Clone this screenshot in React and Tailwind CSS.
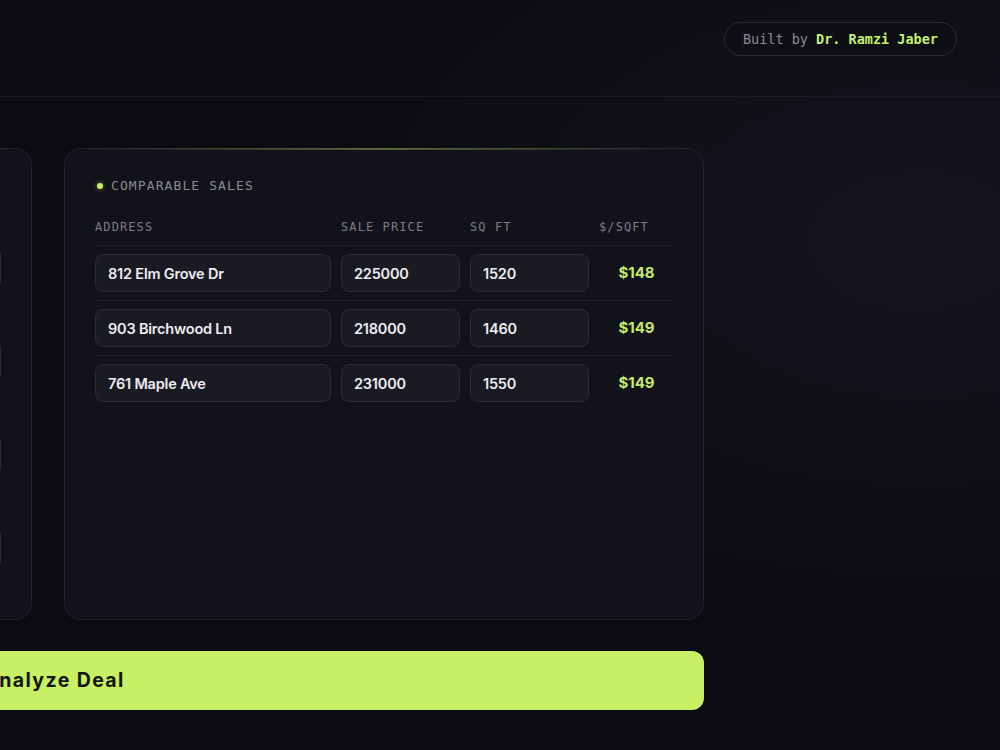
import React from "react";

const comps = [
  { address: "812 Elm Grove Dr", price: "225000", sqft: "1520", ppsf: "$148" },
  { address: "903 Birchwood Ln", price: "218000", sqft: "1460", ppsf: "$149" },
  { address: "761 Maple Ave", price: "231000", sqft: "1550", ppsf: "$149" },
];

const leftFields = [
  { label: "PURCHASE PRICE", value: "210000" },
  { label: "SQUARE FOOTAGE", value: "1500" },
  { label: "REHAB BUDGET", value: "35000" },
  { label: "HOLDING MONTHS", value: "6" },
];

const mono = { fontFamily: '"DejaVu Sans Mono", "Liberation Mono", monospace' };
const sans = { fontFamily: 'Inter, "Noto Sans", sans-serif' };

function Card({ children, className = "" }) {
  return (
    <div
      className={
        "relative w-[640px] shrink-0 h-[472px] rounded-[16px] border border-[#22222b] bg-[#12121a] " +
        className
      }
    >
      <div className="pointer-events-none absolute left-[16px] right-[16px] top-[-1px] h-[2px] bg-gradient-to-r from-transparent via-[#c8f064]/35 to-transparent" />
      {children}
    </div>
  );
}

function Title({ text }) {
  return (
    <div className="flex items-center gap-[8px] h-[16px]">
      <span className="w-[6px] h-[6px] rounded-full bg-[#c8f064] shadow-[0_0_5px_rgba(200,240,100,0.5)] ml-[2px]" />
      <span className="text-[13px] tracking-[1.1px] text-[#8a8a94] leading-[16px]" style={mono}>
        {text}
      </span>
    </div>
  );
}

export default function App() {
  return (
    <div
      className="min-h-screen w-full overflow-hidden bg-[#0b0b11] bg-[radial-gradient(ellipse_60%_50%_at_92%_32%,#15151e_0%,#0b0b11_100%)]"
      style={sans}
    >
      <header className="h-[97px] border-b border-[#1b1b23] flex justify-end items-start pt-[22px] pr-[43px]">
        <div
          className="h-[34px] px-[18px] rounded-full border border-[#2c2c36] bg-[#0e0e15] flex items-center text-[13.5px] text-[#8b8b95]"
          style={mono}
        >
          Built by&nbsp;<span className="font-bold text-[#c8ef6a]">Dr. Ramzi Jaber</span>
        </div>
      </header>

      <main className="ml-[-608px] w-[1312px] mt-[51px]">
        <div className="flex gap-[32px]">
          <Card>
            <div className="px-[30px] pt-[29px]">
              <Title text="PROPERTY DETAILS" />
              <div className="mt-[29px] flex flex-col gap-[26px]">
                {leftFields.map((f) => (
                  <div key={f.label} className="flex flex-col">
                    <label
                      className="h-[16px] leading-[16px] mb-[8px] text-[12px] tracking-[1.1px] text-[#7c7c86]"
                      style={mono}
                    >
                      {f.label}
                    </label>
                    <div className="h-[43px] rounded-[8px] border border-[#2c2c36] bg-[#1a1a23] flex items-center px-[13px] text-[14.5px] font-semibold text-[#ececf1]">
                      {f.value}
                    </div>
                  </div>
                ))}
              </div>
            </div>
          </Card>

          <Card>
            <div className="px-[30px] pt-[29px]">
              <Title text="COMPARABLE SALES" />
              <div className="mt-[25px] grid grid-cols-[236px_119px_119px_75px] gap-x-[10px] pb-[10px] border-b border-[#22222b]">
                {["ADDRESS", "SALE PRICE", "SQ FT", "$/SQFT"].map((h) => (
                  <div
                    key={h}
                    className="text-[12px] tracking-[1.1px] text-[#7c7c86] leading-[16px]"
                    style={mono}
                  >
                    {h}
                  </div>
                ))}
              </div>
              <div className="flex flex-col divide-y divide-[#22222b]">
                {comps.map((c) => (
                  <div
                    key={c.address}
                    className="grid grid-cols-[236px_119px_119px_75px] gap-x-[10px] py-[8px] items-center"
                  >
                    {[c.address, c.price, c.sqft].map((v, i) => (
                      <div
                        key={i}
                        className="h-[38px] rounded-[8px] border border-[#2c2c36] bg-[#1a1a23] flex items-center px-[12px] pt-[2px] text-[14.5px] font-semibold text-[#ececf1] tracking-[-0.2px]"
                      >
                        {v}
                      </div>
                    ))}
                    <div className="text-center text-[15px] font-bold text-[#c3e86a]">{c.ppsf}</div>
                  </div>
                ))}
              </div>
            </div>
          </Card>
        </div>

        <button className="mt-[31px] w-full h-[59px] rounded-[12px] bg-[#c8f064] flex items-center justify-center pl-[12px] text-[19.5px] font-bold text-[#15170f] tracking-[1.4px]">
          Analyze Deal
        </button>
      </main>
    </div>
  );
}
